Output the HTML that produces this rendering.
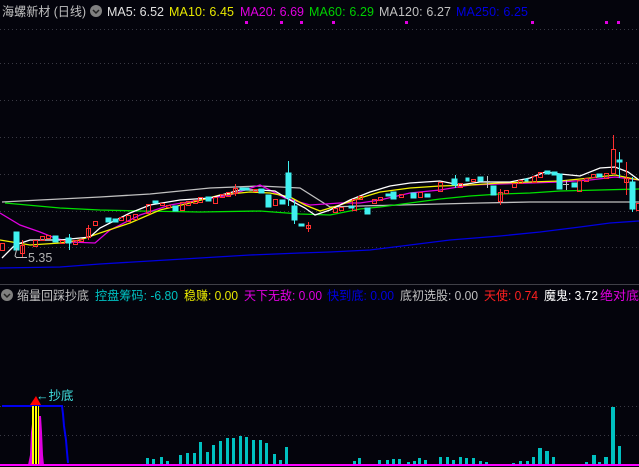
<!DOCTYPE html>
<html><head><meta charset="utf-8"><style>
html,body{margin:0;padding:0;background:#04040c;width:639px;height:467px;overflow:hidden}
svg{display:block}
text{font-family:"Liberation Sans","Noto Sans CJK SC",sans-serif;font-size:12.5px}
</style></head><body>
<svg width="639" height="467" viewBox="0 0 639 467" xmlns="http://www.w3.org/2000/svg">
<rect width="639" height="467" fill="#04040c"/>
<g stroke="#3a3a44" stroke-dasharray="1,3" stroke-width="1">
<line x1="0" y1="29.5" x2="639" y2="29.5"/>
<line x1="0" y1="63.5" x2="639" y2="63.5"/>
<line x1="0" y1="100.5" x2="639" y2="100.5"/>
<line x1="0" y1="137.5" x2="639" y2="137.5"/>
<line x1="0" y1="174.5" x2="639" y2="174.5"/>
<line x1="0" y1="211.5" x2="639" y2="211.5"/>
<line x1="0" y1="247.5" x2="639" y2="247.5"/>
<line x1="0" y1="406.5" x2="639" y2="406.5"/>
<line x1="0" y1="435.5" x2="639" y2="435.5"/>
</g>
<line x1="0" y1="284.5" x2="639" y2="284.5" stroke="#404048"/>
<!-- header 1 -->
<text x="2" y="16" fill="#c0c0c0" textLength="84" lengthAdjust="spacingAndGlyphs">海螺新材 (日线)</text>
<circle cx="96" cy="11" r="6" fill="#808080"/>
<path d="M93 10 L96 13 L99 10" stroke="#222" stroke-width="1.5" fill="none"/>
<text x="107" y="16" fill="#e0e0e0" textLength="57">MA5: 6.52</text>
<text x="169" y="16" fill="#e8e800" textLength="65">MA10: 6.45</text>
<text x="240" y="16" fill="#e000e0" textLength="64">MA20: 6.69</text>
<text x="309" y="16" fill="#00d000" textLength="65">MA60: 6.29</text>
<text x="379" y="16" fill="#c0c0c0" textLength="72">MA120: 6.27</text>
<text x="456" y="16" fill="#0000e0" textLength="72">MA250: 6.25</text>
<g fill="#e000e0">
<rect x="245" y="21" width="3" height="3"/><rect x="280" y="21" width="3" height="3"/><rect x="300" y="21" width="3" height="3"/>
<rect x="332" y="21" width="3" height="3"/><rect x="405" y="21" width="3" height="3"/><rect x="531" y="21" width="3" height="3"/><rect x="605" y="21" width="3" height="3"/><rect x="617" y="21" width="3" height="3"/>
</g>
<!-- MA lines -->
<g fill="none" stroke-width="1.3">
<polyline stroke="#0000e0" points="0,268 60,267 100,264 150,261 200,258 250,255 300,253 330,252 370,250 410,245 450,240 500,236 540,232 580,227 610,223 639,221"/>
<polyline stroke="#c0c0c0" points="2,202 40,200 100,197 150,194 210,188 260,186 300,188 330,207 360,206 400,205 440,204 480,203 530,202 639,202"/>
<polyline stroke="#00e000" points="5,203 60,208 100,210 140,211 200,212 260,211 300,214 330,215 360,209 380,207 410,203 440,199 470,196 500,194 530,193 560,191 600,190 639,189"/>
<polyline stroke="#e000e0" points="0,213 20,225 40,232 55,238 70,242 95,243 110,230 140,215 170,205 200,200 230,195 260,185 285,198 310,205 340,203 360,203 380,200 410,193 440,190 470,185 500,184 530,183 560,182 590,180 615,177 639,180"/>
<polyline stroke="#f0f000" points="0,240 30,245 60,243 80,240 100,233 130,223 160,210 190,203 220,195 250,192 270,193 290,197 305,205 320,211 340,205 360,198 380,192 410,188 440,186 470,185 500,183 530,182 560,181 590,178 615,175 639,180"/>
<polyline stroke="#ffffff" points="2,258 15,245 30,240 60,240 90,237 100,228 130,213 150,205 180,200 210,198 240,190 260,190 275,191 290,200 305,208 315,215 330,210 350,200 370,192 390,186 410,183 440,181 460,185 480,182 510,182 530,178 545,172 560,174 580,176 600,168 615,167 628,172 639,180"/>
</g>
<!-- candles: red hollow -->
<g stroke="#ff3030" fill="none" stroke-width="1">
<rect x="0.5" y="243.5" width="4" height="7"/><rect x="20.5" y="245.5" width="4" height="8"/><rect x="33.5" y="240.5" width="4" height="6"/>
<rect x="40.5" y="236.5" width="4" height="4"/><rect x="46.5" y="235.5" width="4" height="3"/><rect x="60.5" y="240.5" width="4" height="3"/>
<rect x="73.5" y="240.5" width="4" height="4"/><rect x="79.5" y="239.5" width="4" height="2"/><rect x="86.5" y="228.5" width="4" height="9"/>
<rect x="93.5" y="221.5" width="4" height="4"/><rect x="119.5" y="217.5" width="4" height="3"/><rect x="126.5" y="215.5" width="4" height="6"/>
<rect x="133.5" y="214.5" width="4" height="5"/><rect x="146.5" y="204.5" width="4" height="9"/><rect x="160.5" y="203.5" width="4" height="2"/>
<rect x="166.5" y="205.5" width="4" height="2"/><rect x="180.5" y="202.5" width="4" height="8"/><rect x="186.5" y="201.5" width="4" height="4"/>
<rect x="193.5" y="200.5" width="4" height="3"/><rect x="198.5" y="197.5" width="4" height="5"/><rect x="213.5" y="197.5" width="4" height="6"/>
<rect x="220.5" y="194.5" width="4" height="3"/><rect x="226.5" y="192.5" width="4" height="4"/><rect x="233.5" y="188.5" width="4" height="5"/>
<rect x="253.5" y="189.5" width="4" height="2"/><rect x="273.5" y="199.5" width="4" height="6"/><rect x="306.5" y="225.5" width="4" height="3"/>
<rect x="333.5" y="208.5" width="4" height="4"/><rect x="339.5" y="207.5" width="4" height="3"/><rect x="352.5" y="199.5" width="4" height="11"/>
<rect x="358.5" y="196.5" width="4" height="3"/><rect x="372.5" y="199.5" width="4" height="4"/><rect x="378.5" y="197.5" width="4" height="3"/>
<rect x="399.5" y="194.5" width="4" height="3"/><rect x="418.5" y="192.5" width="4" height="5"/><rect x="438.5" y="182.5" width="4" height="9"/>
<rect x="458.5" y="183.5" width="4" height="4"/><rect x="471.5" y="179.5" width="4" height="2"/><rect x="498.5" y="192.5" width="4" height="9"/>
<rect x="504.5" y="190.5" width="4" height="3"/><rect x="512.5" y="183.5" width="4" height="4"/><rect x="518.5" y="180.5" width="4" height="3"/>
<rect x="532.5" y="176.5" width="4" height="6"/><rect x="538.5" y="172.5" width="4" height="5"/><rect x="577.5" y="180.5" width="4" height="11"/>
<rect x="584.5" y="178.5" width="4" height="3"/><rect x="591.5" y="174.5" width="4" height="3"/><rect x="604.5" y="173.5" width="4" height="5"/>
<rect x="611.5" y="149.5" width="4" height="24"/><rect x="624.5" y="178.5" width="4" height="4"/><rect x="636.5" y="203.5" width="4" height="7"/>
</g>
<g stroke="#ff3030" stroke-width="1">
<line x1="613.5" y1="135" x2="613.5" y2="149"/><line x1="626.5" y1="162" x2="626.5" y2="195"/>
<line x1="308.5" y1="222" x2="308.5" y2="232"/><line x1="22.5" y1="240" x2="22.5" y2="258"/><line x1="88.5" y1="225" x2="88.5" y2="240"/>
<line x1="235.5" y1="184" x2="235.5" y2="196"/><line x1="500.5" y1="189" x2="500.5" y2="205"/>
</g>
<!-- candles: cyan filled -->
<g fill="#40f0f0" stroke="#40f0f0">
<rect x="14" y="232" width="5" height="18"/><rect x="53" y="236" width="5" height="6"/><rect x="66" y="238" width="5" height="5"/>
<rect x="106" y="218" width="5" height="4"/><rect x="113" y="219" width="5" height="3"/><rect x="153" y="201" width="5" height="2"/>
<rect x="173" y="206" width="5" height="5"/><rect x="206" y="197" width="5" height="4"/><rect x="240" y="188" width="5" height="2"/>
<rect x="244" y="188" width="5" height="2"/><rect x="259" y="189" width="5" height="4"/><rect x="266" y="195" width="5" height="12"/>
<rect x="280" y="200" width="5" height="4"/><rect x="286" y="173" width="5" height="25"/><rect x="292" y="206" width="5" height="14"/>
<rect x="299" y="224" width="5" height="2"/><rect x="349" y="206" width="5" height="2"/><rect x="365" y="208" width="5" height="6"/>
<rect x="386" y="194" width="5" height="2"/><rect x="391" y="192" width="5" height="7"/><rect x="411" y="193" width="5" height="5"/>
<rect x="425" y="194" width="5" height="3"/><rect x="452" y="179" width="5" height="6"/><rect x="466" y="178" width="3" height="3"/>
<rect x="478" y="177" width="5" height="4"/><rect x="491" y="186" width="5" height="9"/><rect x="525" y="179" width="3" height="2"/>
<rect x="545" y="171" width="5" height="3"/><rect x="552" y="172" width="5" height="3"/><rect x="557" y="174" width="5" height="15"/>
<rect x="572" y="183" width="5" height="4"/><rect x="597" y="174" width="5" height="3"/><rect x="617" y="160" width="5" height="2"/>
<rect x="630" y="182" width="5" height="27"/>
</g>
<g stroke="#40f0f0" stroke-width="1">
<line x1="288.5" y1="161" x2="288.5" y2="206"/><line x1="619.5" y1="152" x2="619.5" y2="178"/><line x1="294.5" y1="200" x2="294.5" y2="224"/>
<line x1="69.5" y1="234" x2="69.5" y2="250"/><line x1="455.5" y1="175" x2="455.5" y2="188"/><line x1="632.5" y1="177" x2="632.5" y2="212"/>
</g>
<g stroke="#c0c0c0"><line x1="484" y1="181.5" x2="490" y2="181.5"/><line x1="487.5" y1="176" x2="487.5" y2="188"/><line x1="563" y1="184.5" x2="569" y2="184.5"/><line x1="566.5" y1="180" x2="566.5" y2="190"/></g>
<!-- low label -->
<polyline points="17,248 15,256 17,258" fill="none" stroke="#c0c0c0"/>
<line x1="16" y1="257.5" x2="27" y2="257.5" stroke="#c0c0c0"/>
<text x="28" y="262" fill="#b0b0b0" font-size="12">5.35</text>
<!-- header 2 -->
<circle cx="7" cy="295" r="6" fill="#808080"/>
<path d="M4 294 L7 297 L10 294" stroke="#222" stroke-width="1.5" fill="none"/>
<text x="17" y="300" fill="#c0c0c0" textLength="72" lengthAdjust="spacingAndGlyphs">缩量回踩抄底</text>
<text x="95" y="300" fill="#00c0c0" textLength="83" lengthAdjust="spacingAndGlyphs">控盘筹码: -6.80</text>
<text x="184" y="300" fill="#e8e800" textLength="54" lengthAdjust="spacingAndGlyphs">稳赚: 0.00</text>
<text x="244" y="300" fill="#e000e0" textLength="78" lengthAdjust="spacingAndGlyphs">天下无敌: 0.00</text>
<text x="327" y="300" fill="#0000e0" textLength="67" lengthAdjust="spacingAndGlyphs">快到底: 0.00</text>
<text x="400" y="300" fill="#c0c0c0" textLength="78" lengthAdjust="spacingAndGlyphs">底初选股: 0.00</text>
<text x="484" y="300" fill="#ff2020" textLength="54" lengthAdjust="spacingAndGlyphs">天使: 0.74</text>
<text x="544" y="300" fill="#ffffff" textLength="54" lengthAdjust="spacingAndGlyphs">魔鬼: 3.72</text>
<text x="600" y="300" fill="#e000e0" textLength="39" lengthAdjust="spacingAndGlyphs">绝对底</text>
<!-- bottom panel -->
<polyline points="2,406 62,406 63,414 64,426 66,440 67,452 68,463" fill="none" stroke="#0000f0" stroke-width="2"/>
<polygon points="28,465 30,455 31,432 33,416 41,416 42,432 43,455 44,465" fill="#e000e0"/>
<rect x="32" y="406" width="7" height="60" fill="#ffff00"/>
<line x1="34.5" y1="406" x2="34.5" y2="466" stroke="#000"/><line x1="37.5" y1="406" x2="37.5" y2="466" stroke="#000"/>
<polygon points="30,405 36,396 41,405" fill="#ff0000"/>
<text x="36" y="400" fill="#40e0e0">←抄底</text>
<g fill="#00c0c0">
<rect x="146" y="458" width="3" height="7"/><rect x="152" y="459" width="3" height="6"/><rect x="160" y="457" width="3" height="8"/><rect x="166" y="461" width="3" height="4"/>
<rect x="179" y="455" width="3" height="10"/><rect x="186" y="453" width="3" height="12"/><rect x="193" y="453" width="3" height="12"/><rect x="199" y="442" width="3" height="23"/>
<rect x="206" y="452" width="3" height="13"/><rect x="212" y="445" width="3" height="20"/><rect x="219" y="441" width="3" height="24"/><rect x="226" y="438" width="3" height="27"/>
<rect x="232" y="438" width="3" height="27"/><rect x="239" y="436" width="3" height="29"/><rect x="245" y="437" width="3" height="28"/><rect x="252" y="440" width="3" height="25"/>
<rect x="259" y="440" width="3" height="25"/><rect x="265" y="443" width="3" height="22"/><rect x="273" y="454" width="3" height="11"/><rect x="279" y="460" width="3" height="5"/>
<rect x="285" y="447" width="3" height="18"/>
<rect x="353" y="461" width="3" height="4"/><rect x="358" y="458" width="3" height="7"/><rect x="378" y="460" width="3" height="5"/><rect x="386" y="460" width="3" height="5"/>
<rect x="392" y="459" width="3" height="6"/><rect x="398" y="459" width="3" height="6"/><rect x="407" y="462" width="3" height="3"/><rect x="413" y="461" width="3" height="4"/>
<rect x="418" y="458" width="3" height="7"/><rect x="424" y="460" width="3" height="5"/><rect x="439" y="457" width="3" height="8"/><rect x="446" y="457" width="3" height="8"/>
<rect x="452" y="460" width="3" height="5"/><rect x="459" y="457" width="3" height="8"/><rect x="465" y="458" width="3" height="7"/><rect x="472" y="458" width="3" height="7"/>
<rect x="479" y="461" width="3" height="4"/><rect x="485" y="462" width="3" height="3"/><rect x="512" y="463" width="3" height="2"/><rect x="519" y="461" width="3" height="4"/>
<rect x="526" y="461" width="3" height="4"/><rect x="532" y="457" width="3" height="8"/><rect x="538" y="448" width="4" height="17"/><rect x="545" y="451" width="4" height="14"/>
<rect x="552" y="457" width="3" height="8"/><rect x="585" y="462" width="3" height="3"/><rect x="592" y="455" width="4" height="10"/><rect x="598" y="462" width="3" height="3"/>
<rect x="604" y="457" width="4" height="8"/><rect x="611" y="407" width="4" height="58"/><rect x="618" y="446" width="3" height="19"/>
</g>
<rect x="0" y="464" width="639" height="2" fill="#ff00ff"/>
</svg>
</body></html>
